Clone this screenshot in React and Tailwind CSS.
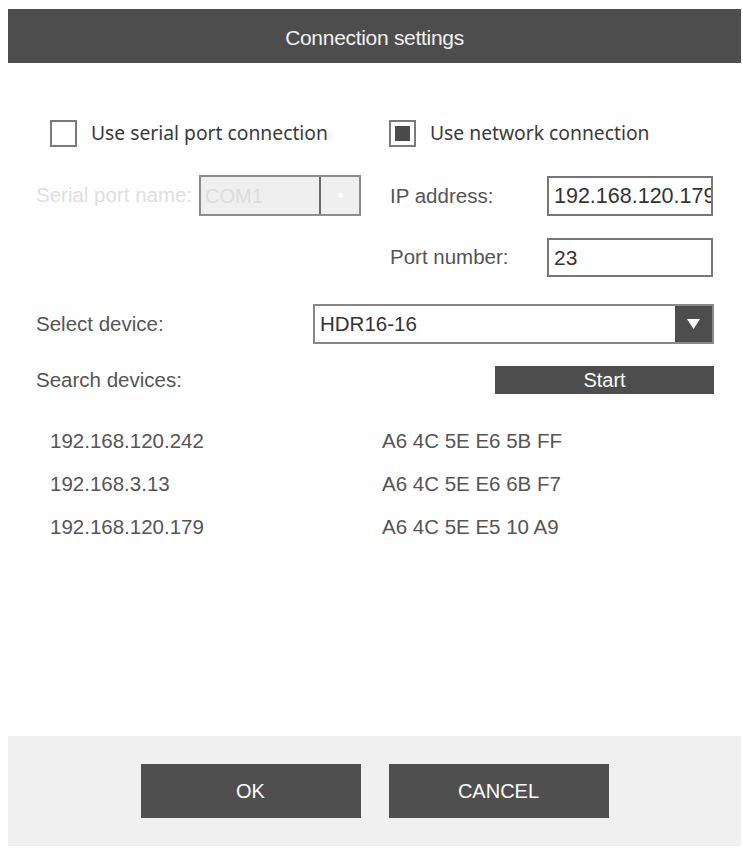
import React from "react";

const devices = [
  { ip: "192.168.120.242", mac: "A6 4C 5E E6 5B FF" },
  { ip: "192.168.3.13", mac: "A6 4C 5E E6 6B F7" },
  { ip: "192.168.120.179", mac: "A6 4C 5E E5 10 A9" },
];

const sans = "font-['Liberation_Sans',Arial,sans-serif]";
const ui = "font-['Noto_Sans','Open_Sans',sans-serif]";

function Checkbox({ checked, label }) {
  return (
    <div className="flex h-[27px] items-center">
      <div className="flex h-[27px] w-[27px] items-center justify-center border-2 border-[#7a7a7a] bg-white">
        {checked && <div className="h-[15px] w-[15px] bg-[#4b4b4b]" />}
      </div>
      <span className={`ml-[14px] text-[19.3px] text-[#3a3a3a] ${ui}`}>{label}</span>
    </div>
  );
}

export default function App() {
  return (
    <div className={`flex h-[848px] w-[743px] flex-col bg-white pb-[2px] pl-[8px] pr-[2px] pt-[9px] ${sans}`}>
      {/* Header */}
      <div className="flex h-[54px] items-center justify-center bg-[#4d4d4d] pt-[3px]">
        <span className="text-[21px] tracking-[-0.3px] text-[#f2f2f2]">Connection settings</span>
      </div>

      {/* Body */}
      <div className="flex-1 pl-[28px]">
        <div className="flex pt-[57px]">
          {/* Left column */}
          <div className="w-[353px]">
            <div className="ml-[14px]">
              <Checkbox label="Use serial port connection" />
            </div>
            <div className="mt-[28px] flex items-center">
              <span className="w-[163px] whitespace-nowrap text-[20.5px] text-[#dedede]">Serial port name:</span>
              <div className="flex h-[41px] w-[162px] border-2 border-[#8c8c8c] bg-[#efefef]">
                <div className="flex flex-1 items-center pl-[4px] text-[20px] text-[#dcdcdc]">COM1</div>
                <div className="flex w-[40px] items-center justify-center border-l-2 border-[#6a6a6a]">
                  <div className="h-[5px] w-[5px] rounded-full bg-white" />
                </div>
              </div>
            </div>
          </div>

          {/* Right column */}
          <div className="flex-1">
            <Checkbox checked label="Use network connection" />
            <div className="mt-[29px] flex items-center">
              <span className="w-[158px] pl-[1px] text-[20.5px] text-[#555]">IP address:</span>
              <div className="flex h-[40px] w-[166px] items-center overflow-hidden whitespace-nowrap border-2 border-[#777] bg-white pl-[5px] text-[21.5px] text-[#333]">
                192.168.120.179
              </div>
            </div>
            <div className="mt-[22px] flex items-center">
              <span className="w-[158px] pl-[1px] text-[20.5px] text-[#555]">Port number:</span>
              <div className="flex h-[39px] w-[166px] items-center border-2 border-[#777] bg-white pl-[5px] text-[21px] text-[#333]">
                23
              </div>
            </div>
          </div>
        </div>

        {/* Select device */}
        <div className="mt-[27px] flex items-center">
          <span className="w-[277px] text-[20.5px] text-[#555]">Select device:</span>
          <div className="flex h-[40px] w-[401px] border-2 border-[#888] bg-white">
            <div className="flex flex-1 items-center pl-[5px] text-[20.5px] text-[#333]">HDR16-16</div>
            <div className="flex w-[37px] items-center justify-center bg-[#4d4d4d]">
              <svg width="13" height="10" viewBox="0 0 13 10">
                <path d="M0 0 H13 L6.5 10 Z" fill="#fff" />
              </svg>
            </div>
          </div>
        </div>

        {/* Search devices */}
        <div className="mt-[21px] flex items-center">
          <span className="w-[459px] text-[20.5px] text-[#555]">Search devices:</span>
          <button className="flex h-[28px] w-[219px] items-center justify-center bg-[#4d4d4d] text-[20px] text-white">
            Start
          </button>
        </div>

        {/* Device list */}
        <div className="mt-[24px] pl-[14px]">
          {devices.map((d) => (
            <div key={d.ip} className="flex h-[43px] items-center text-[20.5px] text-[#555]">
              <span className="w-[332px]">{d.ip}</span>
              <span>{d.mac}</span>
            </div>
          ))}
        </div>
      </div>

      {/* Footer */}
      <div className="flex h-[110px] justify-center gap-[28px] bg-[#f0f0f0] pt-[28px]">
        <button className="h-[54px] w-[220px] bg-[#4f4f4f] text-[20px] text-white">OK</button>
        <button className="h-[54px] w-[220px] bg-[#4f4f4f] text-[20px] text-white">CANCEL</button>
      </div>
    </div>
  );
}
